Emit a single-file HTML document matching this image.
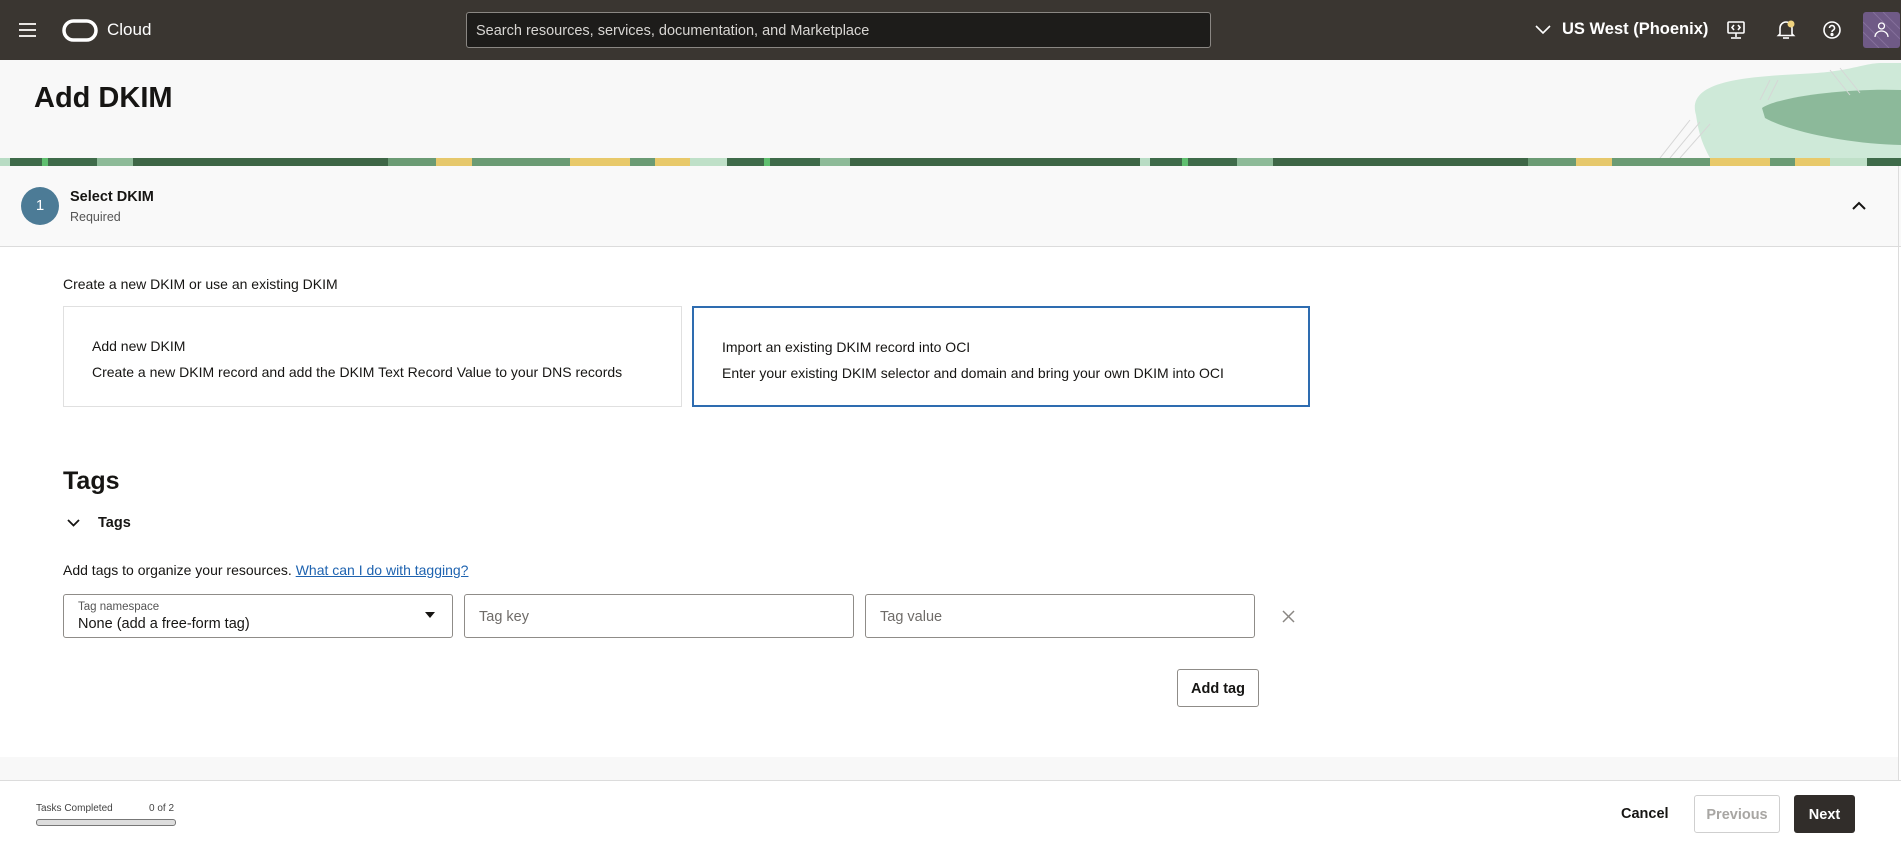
<!DOCTYPE html>
<html><head><meta charset="utf-8"><style>
*{box-sizing:border-box;margin:0;padding:0}
body{width:1901px;height:855px;overflow:hidden;background:#fff;font-family:"Liberation Sans",sans-serif;color:#161513;position:relative}
.abs{position:absolute}
.hdr{left:0;top:0;width:1901px;height:60px;background:#3a3631}
.search{left:466px;top:12px;width:745px;height:36px;background:#1d1c1a;border:1px solid #8a8783;border-radius:3px;color:#d8d6d3;font-size:14.5px;line-height:36px;padding-left:9px}
.white{color:#fff}
.title{left:0;top:60px;width:1901px;height:98px;background:#f8f8f8}
.stripe{left:0;top:158px;width:1901px;height:8px;background:linear-gradient(90deg,#b8dcc4 0 10px,#3f6b4a 10px 42px,#5fbf6f 42px 48px,#3f6b4a 48px 97px,#8dba98 97px 133px,#3e6646 133px 388px,#6b9b74 388px 436px,#e6c86c 436px 472px,#6b9b74 472px 570px,#e8c96a 570px 630px,#6b9b74 630px 655px,#e8c96a 655px 690px,#bfe0c8 690px 727px,#3f6b4a 727px 764px,#5fbf6f 764px 770px,#3f6b4a 770px 820px,#8dba98 820px 850px,#3e6646 850px 1140px);background-size:1140px 8px}
.sec{left:0;top:166px;width:1901px;height:81px;background:#f9f9f9;border-bottom:1px solid #dcdcdc}
.card{top:306px;height:101px;border:1px solid #e0e0e0;background:#fff}
.card .t{position:absolute;top:31px;font-size:14px}
.card .d{position:absolute;top:57px;font-size:14px}
.inp{top:594px;height:44px;border:1px solid #8f8c88;border-radius:3px;background:#fff}
.btn{border-radius:3px;font-size:14.5px;font-weight:bold;text-align:center}
</style></head><body>
<div class="abs hdr"></div>
<svg class="abs" style="left:19px;top:22px" width="17" height="16"><g stroke="#e8e6e3" stroke-width="2"><line x1="0" y1="2" x2="17" y2="2"/><line x1="0" y1="8" x2="17" y2="8"/><line x1="0" y1="14" x2="17" y2="14"/></g></svg>
<svg class="abs" style="left:62px;top:19px" width="36" height="23"><rect x="2" y="2" width="32" height="19" rx="9.5" fill="none" stroke="#fff" stroke-width="3.5"/></svg>
<div class="abs white" style="left:107px;top:20px;font-size:17px">Cloud</div>
<div class="abs search">Search resources, services, documentation, and Marketplace</div>
<svg class="abs" style="left:1535px;top:25px" width="16" height="10"><polyline points="1,1 8,8 15,1" fill="none" stroke="#fff" stroke-width="1.6"/></svg>
<div class="abs white" style="left:1562px;top:20px;font-size:16.5px;font-weight:bold">US West (Phoenix)</div>
<svg class="abs" style="left:1726px;top:20px" width="20" height="20" fill="none" stroke="#fff" stroke-width="1.6"><rect x="2" y="2" width="16" height="11" rx="1"/><line x1="10" y1="13" x2="10" y2="17"/><line x1="5" y1="18" x2="15" y2="18"/><polyline points="8,5 6,7.5 8,10"/><polyline points="12,5 14,7.5 12,10"/></svg>
<svg class="abs" style="left:1775px;top:19px" width="22" height="22" fill="none" stroke="#fff" stroke-width="1.6"><path d="M5 15 V9 a6 6 0 0 1 12 0 V15 L18.5 16.5 H3.5 Z"/><path d="M8 19 h6"/><circle cx="16" cy="5" r="3.5" fill="#f0d37e" stroke="none"/></svg>
<svg class="abs" style="left:1822px;top:20px" width="20" height="20" fill="none" stroke="#fff" stroke-width="1.6"><circle cx="10" cy="10" r="8"/><path d="M7.5 8 a2.5 2.5 0 1 1 3.5 2.3 c-.8.4-1 1-1 1.8"/><circle cx="10" cy="14.5" r=".8" fill="#fff"/></svg>
<svg class="abs" style="left:1863px;top:12px" width="37" height="36"><rect width="37" height="36" rx="3" fill="#6f5a86"/><g stroke="#85709b" stroke-width="1"><line x1="0" y1="10" x2="26" y2="36"/><line x1="0" y1="20" x2="16" y2="36"/><line x1="10" y1="0" x2="37" y2="27"/><line x1="20" y1="0" x2="37" y2="17"/></g><circle cx="18.5" cy="14" r="3" fill="none" stroke="#fff" stroke-width="1.3"/><path d="M12 25 a6.5 6 0 0 1 13 0" fill="none" stroke="#fff" stroke-width="1.3"/></svg>

<div class="abs title"></div>
<svg class="abs" style="left:1650px;top:60px" width="251" height="98"><path d="M46 55 C36 22 90 17 150 14 C200 12 210 4 230 3 L251 3 L251 98 L60 98 C50 80 48 68 46 55Z" fill="#cee9d8"/><path d="M112 48 C130 36 200 28 251 30 L251 85 C200 84 140 72 115 58 Z" fill="#8cb99a"/><g stroke="#d6d6d6" stroke-width="1" fill="none"><path d="M10 98 L40 60 M20 98 L50 62 M30 98 L60 64 M110 40 L120 20 M118 40 L128 20 M180 10 L200 35 M190 8 L210 33"/></g></svg>
<div class="abs" style="left:34px;top:82px;font-size:29px;font-weight:bold">Add DKIM</div>
<div class="abs stripe"></div>
<div class="abs sec"></div>
<div class="abs" style="left:21px;top:187px;width:38px;height:38px;border-radius:50%;background:#4c7b96;color:#fff;font-size:15px;text-align:center;line-height:38px">1</div>
<div class="abs" style="left:70px;top:189px;font-size:14.5px;font-weight:bold">Select DKIM</div>
<div class="abs" style="left:70px;top:210px;font-size:12.5px;color:#555">Required</div>
<svg class="abs" style="left:1852px;top:201px" width="14" height="9"><polyline points="1,8 7,2 13,8" fill="none" stroke="#161513" stroke-width="2"/></svg>
<div class="abs" style="left:1898px;top:166px;width:1px;height:614px;background:#dcdcdc"></div>

<div class="abs" style="left:63px;top:276px;font-size:14px">Create a new DKIM or use an existing DKIM</div>
<div class="abs card" style="left:63px;width:619px"><div class="t" style="left:28px">Add new DKIM</div><div class="d" style="left:28px">Create a new DKIM record and add the DKIM Text Record Value to your DNS records</div></div>
<div class="abs card" style="left:692px;width:618px;border:2px solid #2e6cb0"><div class="t" style="left:28px">Import an existing DKIM record into OCI</div><div class="d" style="left:28px">Enter your existing DKIM selector and domain and bring your own DKIM into OCI</div></div>

<div class="abs" style="left:63px;top:467px;font-size:25px;font-weight:bold">Tags</div>
<svg class="abs" style="left:67px;top:519px" width="13" height="8"><polyline points="1,1 6.5,6.5 12,1" fill="none" stroke="#161513" stroke-width="1.8"/></svg>
<div class="abs" style="left:98px;top:515px;font-size:14.5px;font-weight:bold">Tags</div>
<div class="abs" style="left:63px;top:562px;font-size:14px">Add tags to organize your resources. <span style="color:#1e63b0;text-decoration:underline">What can I do with tagging?</span></div>
<div class="abs inp" style="left:63px;width:390px"><div style="position:absolute;left:14px;top:6px;font-size:11.5px;color:#555">Tag namespace</div><div style="position:absolute;left:14px;top:21px;font-size:14.5px">None (add a free-form tag)</div><div style="position:absolute;left:361px;top:17px;width:0;height:0;border-left:5px solid transparent;border-right:5px solid transparent;border-top:6px solid #161513"></div></div>
<div class="abs inp" style="left:464px;width:390px"><div style="position:absolute;left:14px;top:14px;font-size:14.5px;color:#6f6c69">Tag key</div></div>
<div class="abs inp" style="left:865px;width:390px"><div style="position:absolute;left:14px;top:14px;font-size:14.5px;color:#6f6c69">Tag value</div></div>
<svg class="abs" style="left:1282px;top:610px" width="13" height="13"><g stroke="#8a8783" stroke-width="1.5"><line x1="1" y1="1" x2="12" y2="12"/><line x1="12" y1="1" x2="1" y2="12"/></g></svg>
<div class="abs btn" style="left:1177px;top:669px;width:82px;height:38px;border:1px solid #8f8c88;line-height:38px;background:#fff">Add tag</div>

<div class="abs" style="left:0;top:757px;width:1898px;height:23px;background:#f8f8f8"></div>
<div class="abs" style="left:0;top:780px;width:1901px;height:1px;background:#dcdcdc"></div>
<div class="abs" style="left:36px;top:803px;font-size:10px;color:#444">Tasks Completed</div>
<div class="abs" style="left:149px;top:803px;font-size:10px;color:#444">0 of 2</div>
<div class="abs" style="left:36px;top:819px;width:140px;height:7px;border:1px solid #777;border-radius:3px;background:#ddd"></div>
<div class="abs" style="left:1621px;top:806px;font-size:14.5px;font-weight:bold">Cancel</div>
<div class="abs btn" style="left:1694px;top:795px;width:86px;height:38px;border:1px solid #cfcfcf;line-height:38px;color:#a8a6a3">Previous</div>
<div class="abs btn" style="left:1794px;top:795px;width:61px;height:38px;background:#312d2a;color:#fff;line-height:40px">Next</div>
</body></html>
